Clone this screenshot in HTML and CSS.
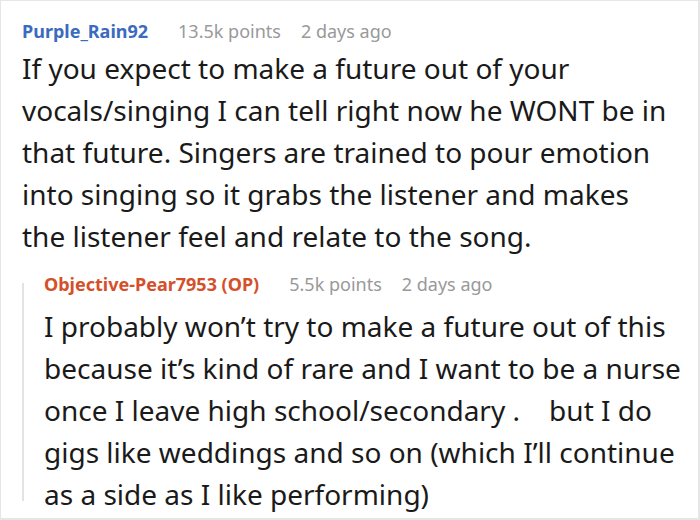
FILE: index.html
```html
<!DOCTYPE html>
<html>
<head>
<meta charset="utf-8">
<link rel="stylesheet" href="styles.css">
</head>
<body>
<div class="frame">
  <div class="comment">
    <div class="meta">
      <span class="user">Purple_Rain92</span>
      <span class="info">13.5k points</span>
      <span class="info">2 days ago</span>
    </div>
    <p class="body">If you expect to make a future out of your vocals/singing I can tell right now he WONT be in that future. Singers are trained to pour emotion into singing so it grabs the listener and makes the listener feel and relate to the song.</p>
    <div class="reply">
      <div class="meta">
        <span class="user op">Objective-Pear7953 (OP)</span>
        <span class="info">5.5k points</span>
        <span class="info">2 days ago</span>
      </div>
      <p class="body">I probably won’t try to make a future out of this because it’s kind of rare and I want to be a nurse once I leave high school/secondary .&nbsp;&nbsp;&nbsp; but I do gigs like weddings and so on (which I’ll continue as a side as I like performing)</p>
    </div>
  </div>
</div>
</body>
</html>
```
FILE: styles.css
```css
html, body {
  margin: 0;
  padding: 0;
  background: #fff;
}
.frame {
  width: 700px;
  height: 520px;
  box-sizing: border-box;
  border: 1px solid #e6e6e6;
  border-right-width: 2px;
  border-bottom-width: 2px;
  overflow: hidden;
  font-family: "Noto Sans", sans-serif;
  color: #1a1a1a;
}
.comment {
  padding: 18px 0 0 21px;
}
.meta {
  display: flex;
  gap: 20px;
  font-size: 18px;
  line-height: 24px;
}
.user {
  font-weight: 700;
  color: #3b6bc0;
  margin-right: 10px;
}
.user.op {
  color: #d4502a;
}
.info {
  color: #999;
}
.body {
  margin: 4px 0 0 0;
  font-size: 28px;
  line-height: 42px;
  padding-right: 26px;
}
.reply {
  position: relative;
  margin-top: 15px;
  padding-left: 22px;
}
.reply::before {
  content: "";
  position: absolute;
  left: 0;
  top: 11px;
  bottom: 14px;
  width: 2px;
  background: #e3e3e3;
}
.reply .body {
  margin-top: 9px;
  padding-right: 12px;
}
```
